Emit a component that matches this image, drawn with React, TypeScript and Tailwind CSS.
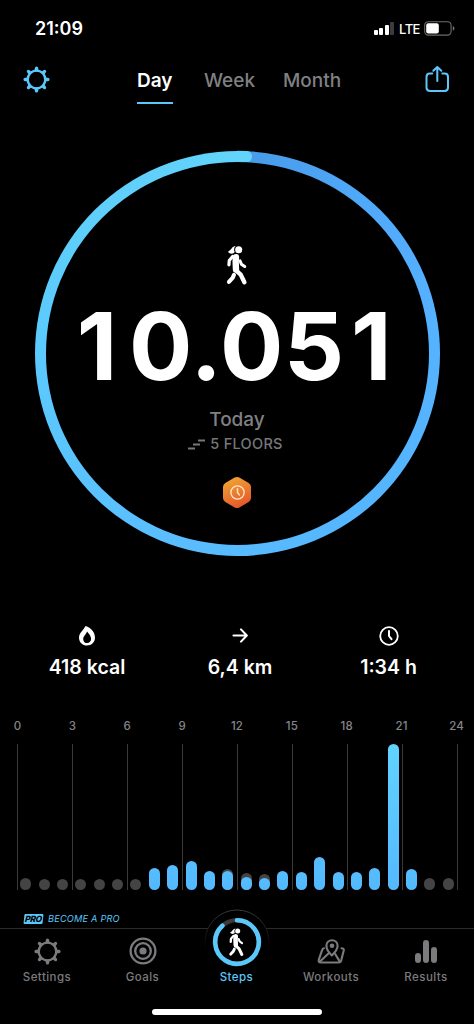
import React from 'react';

const HOURS = [
  { steps: 0, average: 12 },
  { steps: 0, average: 11 },
  { steps: 0, average: 11 },
  { steps: 0, average: 11 },
  { steps: 0, average: 11 },
  { steps: 0, average: 11 },
  { steps: 0, average: 11 },
  { steps: 22, average: 0 },
  { steps: 25, average: 0 },
  { steps: 29, average: 0 },
  { steps: 19, average: 0 },
  { steps: 19, average: 21 },
  { steps: 13, average: 17 },
  { steps: 12, average: 16 },
  { steps: 19.5, average: 0 },
  { steps: 18.5, average: 0 },
  { steps: 33, average: 0 },
  { steps: 18.5, average: 0 },
  { steps: 18.5, average: 0 },
  { steps: 22, average: 0 },
  { steps: 146, average: 0 },
  { steps: 21, average: 0 },
  { steps: 0, average: 12 },
  { steps: 0, average: 12 },
];

const LABELS = ['0', '3', '6', '9', '12', '15', '18', '21', '24'];

const TEETH = [0, 45, 90, 135, 180, 225, 270, 315];

const GearIcon: React.FC<{ className?: string }> = ({ className }) => (
  <svg viewBox="0 0 26 26" className={className}>
    <circle cx="13" cy="13" r="8.5" fill="none" stroke="currentColor" strokeWidth="2.3" />
    {TEETH.map(angle => (
      <path
        key={angle}
        d="M9.6 5.2 L11.2 3.4 L11.4 2 Q11.5 0.4 13 0.4 Q14.5 0.4 14.6 2 L14.8 3.4 L16.4 5.2 Z"
        fill="currentColor"
        transform={`rotate(${angle} 13 13)`}
      />
    ))}
  </svg>
);

const WalkerIcon: React.FC<{ className?: string }> = ({ className }) => (
  <svg viewBox="0 0 70 125" className={className} fill="none" stroke="currentColor" strokeLinecap="round" strokeLinejoin="round">
    <circle cx="40" cy="17" r="10.5" fill="currentColor" stroke="none" />
    <path d="M31 6 C20 6 19 18 8 23 C13 31 25 30 28 24 C25 18 26 11 31 6 Z" fill="currentColor" stroke="none" />
    <path d="M32 39 L31 52 L32 76" strokeWidth="19" />
    <path d="M22 37 L12 49 L11 62" strokeWidth="9.5" />
    <path d="M44 50 L48 60 L58 67" strokeWidth="9" />
    <path d="M33 79 L46 91 L57 114" strokeWidth="13" />
    <path d="M26 92 L22 101 L11 113" strokeWidth="12" />
  </svg>
);

const ClockIcon: React.FC<{ className?: string }> = ({ className }) => (
  <svg viewBox="0 0 20 20" className={className} fill="none" stroke="currentColor" strokeLinecap="round">
    <circle cx="10" cy="10" r="8.8" strokeWidth="1.8" />
    <path d="M10 5 V10 L12.5 13.2" strokeWidth="2" strokeLinejoin="round" />
  </svg>
);

const StatusBar: React.FC = () => (
  <div className="flex h-[57px] items-center justify-between pl-[35px] pr-[18px]">
    <span className="text-[18px] font-semibold">21:09</span>
    <div className="flex items-center">
      <div className="flex h-[13px] items-end gap-[1.5px]">
        <span className="h-[5px] w-[4px] rounded-[1px] bg-white" />
        <span className="h-[7px] w-[4px] rounded-[1px] bg-white" />
        <span className="h-[10px] w-[4px] rounded-[1px] bg-white" />
        <span className="h-[13px] w-[4px] rounded-[1px] bg-[#3c3c3c]" />
      </div>
      <span className="ml-[5px] w-[21px] text-[13px] leading-4 font-medium tracking-[-0.5px]">LTE</span>
      <svg width="32" height="15" viewBox="0 0 32 15" className="ml-[4px]">
        <rect x="0.7" y="0.7" width="26.4" height="13.4" rx="3.6" fill="none" stroke="#6b6b6b" strokeWidth="1.1" />
        <rect x="2.2" y="2.2" width="12.6" height="10.4" rx="2" fill="#fff" />
        <path d="M28.8 5 C31 6 31 8.8 28.8 9.8 Z" fill="#777" />
      </svg>
    </div>
  </div>
);

const Header: React.FC = () => (
  <header className="flex h-[50px] items-start justify-between pr-[24px] pl-[23px] text-[#5ac8fa]">
    <GearIcon className="mt-[9px] size-[27px]" />
    <nav className="flex gap-[31px] pl-[3px] text-[19px] leading-[24px] font-medium text-[#808084]">
      <div className="mt-[12px] w-[36px] border-b-2 border-[#5ac8fa] pb-[9px] font-semibold text-white">Day</div>
      <div className="mt-[12px] w-[48px]">Week</div>
      <div className="mt-[12px] w-[57px]">Month</div>
    </nav>
    <svg viewBox="0 0 26 28" className="mt-[8px] h-[28px] w-[26px]" fill="none" stroke="currentColor" strokeWidth="2" strokeLinecap="round" strokeLinejoin="round">
      <path d="M8.2 8.6 H6 Q2.5 8.6 2.5 12 V22.6 Q2.5 26 6 26 H20.5 Q24 26 24 22.6 V12 Q24 8.6 20.5 8.6 H18.3" />
      <path d="M13.3 16 V2.2 M9.3 5.8 L13.3 2 L17.3 5.8" />
    </svg>
  </header>
);

const StepRing: React.FC = () => (
  <section className="relative mx-auto mt-[44px] size-[405px] rounded-full bg-[conic-gradient(from_2deg,#479be9_0%,#50a8f8_10%,#55b1ff_20%,#55b6ff_40%,#5abfff_58%,#5bcafd_75%,#60d0fa_90%,#62d3fb_100%)] p-[11px]">
    <span className="absolute top-0 left-[202px] h-[11px] w-[15px] rotate-[2deg] rounded-r-[5px] bg-[#62d3fb]" />
    <div className="flex size-full flex-col items-center rounded-full bg-black">
      <WalkerIcon className="mt-[82px] h-[42px] w-[24px]" />
      <div className="mt-[10px] mr-[5px] text-[94px] leading-[100px] font-bold tracking-[0.8px] whitespace-nowrap">
        <span className="mr-[11px]">1</span>0.05<span className="ml-[6px]">1</span>
      </div>
      <div className="mt-[12px] text-[19px] leading-[24px] font-medium text-[#808084]">Today</div>
      <div className="mt-[2px] mr-[3px] flex h-[20px] items-center gap-[5px] text-[14.5px] font-medium tracking-[0.3px] text-[#77777b]">
        <svg width="17" height="11" viewBox="0 0 17 11" stroke="currentColor" strokeWidth="2">
          <path d="M0 9.5 H7 M5 5.5 H12 M10 1.5 H17" />
        </svg>
        5 FLOORS
      </div>
      <div className="mt-[22px] grid h-[33px] w-[30px] place-items-center text-[#ffe5c8]">
        <svg viewBox="0 0 30 33" className="h-[33px] w-[30px] [grid-area:1/1]">
          <defs>
            <linearGradient id="badge" x1="0" y1="0" x2="0.4" y2="1">
              <stop offset="0" stopColor="#f3ad35" />
              <stop offset="1" stopColor="#e55b2c" />
            </linearGradient>
          </defs>
          <path d="M12.7 1.6 Q15 0.4 17.3 1.6 L26.7 7 Q29 8.3 29 11 V22 Q29 24.7 26.7 26 L17.3 31.4 Q15 32.6 12.7 31.4 L3.3 26 Q1 24.7 1 22 V11 Q1 8.3 3.3 7 Z" fill="url(#badge)" />
        </svg>
        <ClockIcon className="size-[15px] [grid-area:1/1]" />
      </div>
    </div>
  </section>
);

const Stats: React.FC = () => (
  <section className="mt-[69px] flex h-[56px] pl-[11px] text-[19.5px] leading-[24px] font-semibold">
    <div className="flex w-[152px] flex-col items-center">
      <svg viewBox="0 0 18 22" className="h-[22px] w-[18px]">
        <path fillRule="evenodd" fill="#fff" d="M7.6 1 C13 2.6 17 7.4 17 12.6 C17 17.2 13.6 20.6 9 20.6 C4.4 20.6 1 17.2 1 12.8 C1 8 5.2 5.4 7.6 1 Z M9 6.4 C8.2 9.4 5.2 11 5.2 13.9 C5.2 16.4 6.9 18.1 9.1 18.1 C11.4 18.1 13.1 16.3 13.1 13.8 C13.1 11 11 8.8 9 6.4 Z" />
      </svg>
      <div className="mt-[8px]">418 kcal</div>
    </div>
    <div className="flex w-[154px] flex-col items-center">
      <svg viewBox="0 0 16 22" className="h-[22px] w-[16px]" fill="none" stroke="#fff" strokeWidth="2.1" strokeLinecap="round" strokeLinejoin="round">
        <path d="M1.5 10.5 H14.5 M9 4.4 L14.8 10.5 L9 16.6" />
      </svg>
      <div className="mt-[8px]">6,4 km</div>
    </div>
    <div className="flex w-[143px] flex-col items-center">
      <ClockIcon className="my-[1px] size-[20px]" />
      <div className="mt-[8px]">1:34 h</div>
    </div>
  </section>
);

const HourChart: React.FC = () => (
  <section className="mt-[37px]">
    <div className="-mx-[10px] flex justify-between text-center text-[11.5px] leading-[16px] font-medium tracking-[0.2px] text-[#858589]">
      {LABELS.map(label => (
        <span key={label} className="w-[55px]">{label}</span>
      ))}
    </div>
    <div className="mx-[16.5px] mt-[10px] grid h-[146px]">
      <div className="flex justify-between [grid-area:1/1]">
        {LABELS.map(label => (
          <span key={label} className="w-px bg-[#3a3a3a]" />
        ))}
      </div>
      <div className="grid grid-cols-24 [grid-area:1/1]">
        {HOURS.map((hour, i) => (
          <div key={i} className="grid items-end justify-center">
            <span className="w-[11px] rounded-full bg-[#444] [grid-area:1/1]" style={{ height: hour.average }} />
            <span
              className="w-[11px] rounded-full bg-linear-to-t from-[#53b9ff] to-[#55bdff] [grid-area:1/1]"
              style={{ height: hour.steps, ...(hour.steps > 100 && { backgroundImage: 'linear-gradient(#62d3ff, #54b8ff)' }) }}
            />
          </div>
        ))}
      </div>
    </div>
  </section>
);

const ProBanner: React.FC = () => (
  <div className="mt-[22px] flex h-[14px] items-center gap-[5px] pl-[24px] text-[9.2px] leading-[14px] tracking-[0.2px] text-[#5ac8fa] italic">
    <span className="flex h-[10px] w-[19px] -skew-x-6 items-center justify-center rounded-[1px] bg-[#5ac8fa] text-[8.5px] font-extrabold tracking-[-0.3px] text-black">PRO</span>
    BECOME A PRO
  </div>
);

const TabBar: React.FC = () => (
  <nav className="mt-[2px] flex h-[97px] border-t border-[#2b2b2b] text-center text-[11.5px] leading-[16px] font-medium tracking-[0.45px] text-[#7b7b7e]">
    <div className="flex w-[94px] flex-col items-center pt-[9px]">
      <GearIcon className="size-[27px]" />
      <span className="mt-[4px]">Settings</span>
    </div>
    <div className="flex w-[97px] flex-col items-center pt-[8px]">
      <svg viewBox="0 0 28 28" className="size-[28px]" fill="none" stroke="currentColor" strokeWidth="2.3">
        <circle cx="14" cy="14" r="12.4" />
        <circle cx="14" cy="14" r="7.8" />
        <circle cx="14" cy="14" r="3.6" fill="currentColor" stroke="none" />
      </svg>
      <span className="mt-[4px]">Goals</span>
    </div>
    <div className="flex w-[91px] flex-col items-center text-[#5ac8fa]">
      <div className="-mt-[20px] grid h-[60px] w-[66px] justify-items-center text-white">
        <svg viewBox="0 0 66 60" className="z-10 h-[60px] w-[66px] [grid-area:1/1]" fill="none">
          <defs>
            <linearGradient id="rim" x1="0" y1="0" x2="0" y2="1">
              <stop offset="0" stopColor="#3a3a3a" />
              <stop offset="0.6" stopColor="#000" />
            </linearGradient>
          </defs>
          <circle cx="33" cy="33" r="32" fill="#000" stroke="url(#rim)" />
          <circle cx="33" cy="33" r="21.8" stroke="#3a3a3a" strokeWidth="4.3" />
          <path d="M33 11.2 A21.8 21.8 0 1 1 18.4 16.8" stroke="#5ac8fa" strokeWidth="4.6" strokeLinecap="round" />
        </svg>
        <WalkerIcon className="z-20 mt-[18px] h-[30px] w-[17px] [grid-area:1/1]" />
      </div>
      <span>Steps</span>
    </div>
    <div className="flex w-[98px] flex-col items-center pt-[8px]">
      <svg viewBox="0 0 28 28" className="size-[28px]" fill="none" stroke="currentColor" strokeWidth="2.1" strokeLinecap="round" strokeLinejoin="round">
        <path d="M14.8 18.5 C12 15.8 9.4 12.6 9.4 8.8 C9.4 5.4 12 3.2 15 3.2 C18 3.2 20.6 5.4 20.6 8.8 C20.6 12.6 17.6 15.8 14.8 18.5 Z" />
        <circle cx="15" cy="8.8" r="2.3" fill="currentColor" stroke="none" />
        <path d="M7 11.2 Q5.6 11.4 5.2 12.8 L1.8 22.7 Q1 25.5 4 25.5 H21.5 Q23.6 25.5 24.2 23.6 L26.8 13.2 Q27 11.2 24.5 11.2" />
        <path d="M3 24.5 L11.2 16.8 M18 16.8 L22.8 24.6" />
      </svg>
      <span className="mt-[4px]">Workouts</span>
    </div>
    <div className="flex w-[92px] flex-col items-center pt-[8px]">
      <div className="flex h-[28px] items-end justify-center gap-[2px] pb-[2px]">
        <span className="h-[10px] w-[6px] rounded-[3px] bg-current" />
        <span className="h-[23px] w-[6px] rounded-[3px] bg-current" />
        <span className="h-[16px] w-[6px] rounded-[3px] bg-current" />
      </div>
      <span className="mt-[4px]">Results</span>
    </div>
  </nav>
);

const App: React.FC = () => {
  return (
    <div className="flex h-[1024px] w-[474px] flex-col overflow-hidden bg-black font-[Inter,sans-serif] text-white">
      <StatusBar />
      <Header />
      <StepRing />
      <Stats />
      <HourChart />
      <ProBanner />
      <TabBar />
      <div className="mx-auto -mt-[16px] h-[6px] w-[170px] shrink-0 rounded-full bg-white" />
    </div>
  );
};

export default App;
